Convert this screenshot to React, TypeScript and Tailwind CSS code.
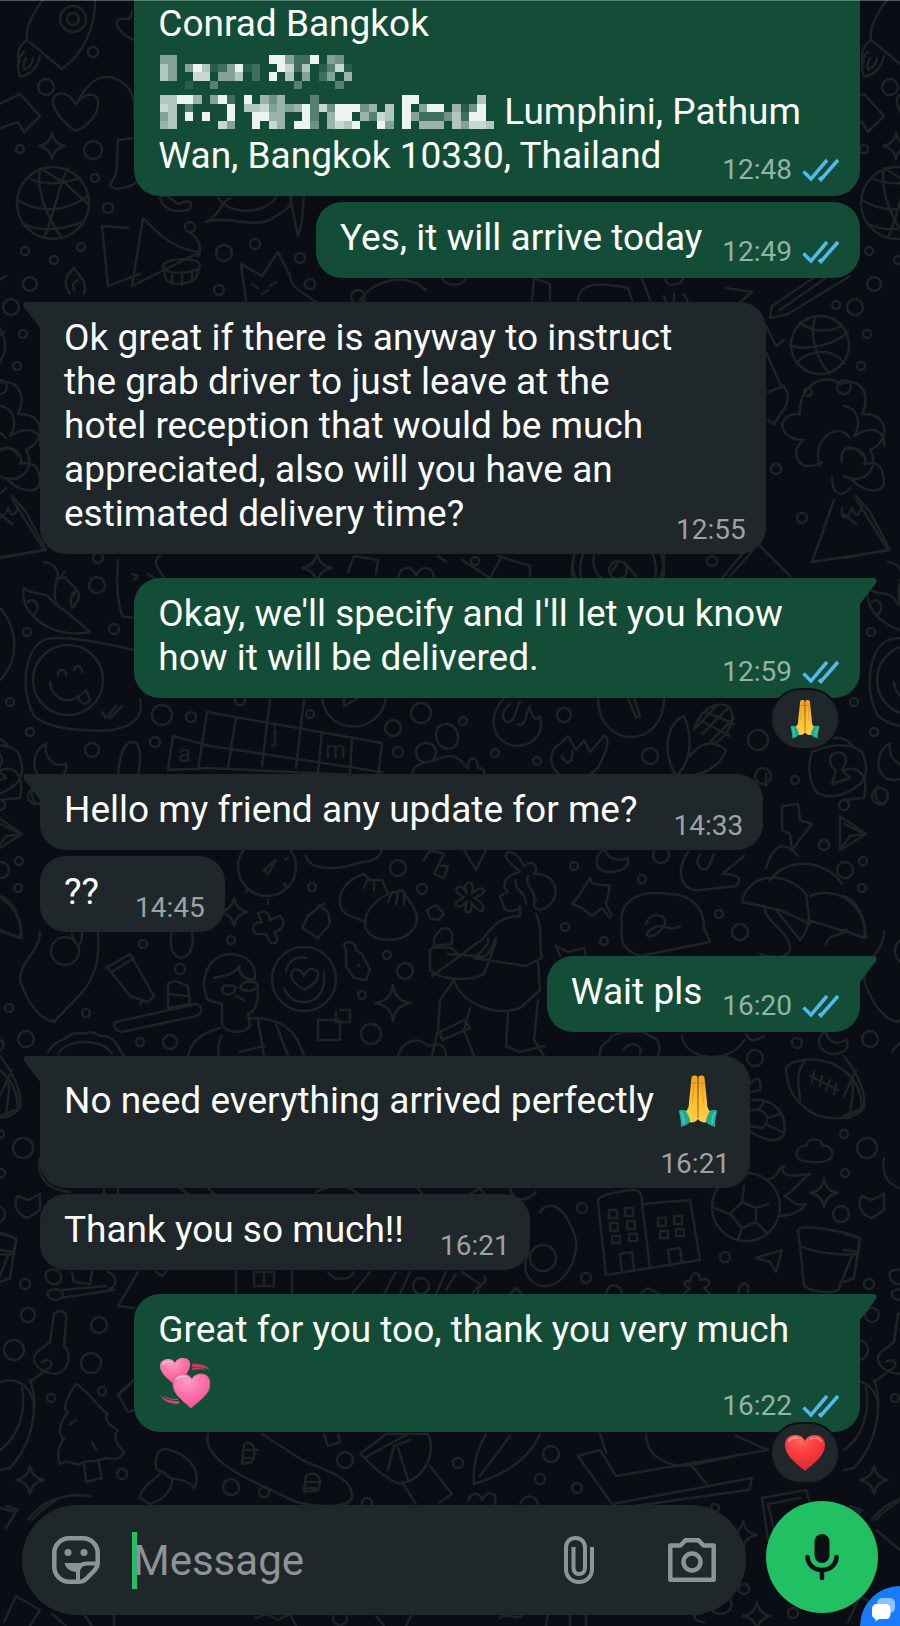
import React from "react";

type EmojiName = "hands" | "heart" | "hearts";

interface Message {
  id: number;
  from: "me" | "them";
  lines: React.ReactNode[];
  time: string;
  first?: boolean; // first of a group, gets the tail
  wide?: boolean; // wrapped text, fills the whole bubble width
  metaBelow?: boolean;
  cutOff?: boolean;
  reaction?: EmojiName;
}

/* ---------- wallpaper ---------- */

// x, y, radius
const BUBBLES = [
  [93, 52, 5], [46, 87, 8], [20, 149, 4], [93, 150, 9], [95, 178, 4], [108, 208, 5], [190, 227, 5], [25, 251, 4],
  [54, 260, 4], [81, 247, 4], [224, 253, 8], [255, 244, 5], [30, 284, 7], [300, 258, 5], [219, 290, 5], [310, 284, 5],
  [358, 297, 7], [11, 307, 8], [23, 334, 4], [17, 366, 4], [0, 387, 7], [836, 305, 4], [808, 392, 4], [776, 469, 5],
  [802, 518, 5], [712, 561, 5], [475, 561, 4], [98, 558, 5], [97, 585, 8], [27, 632, 4], [114, 629, 5], [10, 702, 4],
  [162, 715, 10], [191, 717, 5], [30, 732, 4], [240, 700, 5], [155, 742, 5], [92, 750, 7], [310, 714, 4], [393, 728, 8],
  [421, 713, 10], [463, 721, 4], [398, 752, 5], [495, 753, 4], [564, 715, 7], [650, 756, 8], [537, 761, 4], [758, 740, 10],
  [795, 780, 4], [763, 776, 8], [36, 796, 8], [0, 805, 5], [824, 845, 5], [19, 861, 4], [18, 888, 4], [65, 951, 14],
  [143, 944, 4], [180, 969, 5], [231, 940, 4], [312, 887, 4], [398, 868, 8], [422, 889, 5], [387, 955, 4], [405, 971, 8],
  [362, 995, 4], [9, 1008, 4], [86, 1013, 4], [26, 1039, 8], [140, 1042, 4], [170, 1042, 7], [371, 1034, 10], [574, 866, 4],
  [661, 855, 8], [642, 879, 4], [565, 927, 4], [604, 941, 4], [719, 914, 4], [740, 932, 8], [797, 1043, 5], [1, 870, 8],
  [755, 1058, 8], [582, 1208, 5], [725, 1257, 5], [586, 1278, 5], [841, 1214, 8], [25, 1284, 5], [1, 1173, 4], [0, 1134, 4],
  [23, 1148, 10], [421, 1286, 8], [28, 1315, 7], [99, 1325, 8], [91, 1363, 10], [14, 1350, 10], [51, 1398, 4], [102, 1391, 4],
  [122, 1474, 5], [231, 1487, 8], [264, 1492, 5], [345, 1460, 8], [458, 1463, 5], [551, 1454, 8], [540, 1479, 5],
  [577, 1488, 5], [367, 1503, 5], [715, 1508, 4], [744, 1589, 5], [793, 1613, 5], [340, 1618, 7],
];

const SPARKLES = [
  [52, 146, 13], [317, 568, 15], [234, 912, 14], [393, 1003, 18], [824, 1193, 14], [30, 1480, 14], [743, 1535, 14], [757, 1616, 14],
];

const STROKES = [
  // rocket with flame
  "M95 -6C97 28 82 55 62 69L27 40C24 26 38 4 50 -8M27 40C18 46 16 56 20 62M24 52C16 58 18 70 20 77C32 74 38 66 40 56M26 58C22 64 24 66 24 70C32 66 32 62 33 58",
  // broken arrow, heart and waving person
  "M0 104L20 94L40 116L24 132L18 122L0 128M76 131C56 118 46 98 58 94C66 91 72 98 76 104C84 92 98 92 98 102C99 114 88 126 76 131M76 104C88 80 104 70 122 82C134 90 136 106 134 120M134 40C120 34 114 24 118 20C126 16 130 24 132 12M134 138L118 140C116 160 120 172 110 184C112 194 134 186 138 180",
  // lattice ball
  "M28 178C44 186 62 184 80 178M18 200C40 214 66 212 88 196M24 224C40 232 62 230 82 222M40 168C36 190 46 216 62 238M68 168C58 186 56 210 44 238M40 168L66 184L88 204",
  // paper sails and drum
  "M102 226L108 286L140 274M102 226L128 228M143 218L132 286L200 252C176 250 160 236 143 218ZM190 232C200 240 202 250 198 256M163 266C163 258 200 256 200 266C200 274 163 276 163 266ZM163 266L166 280C174 286 192 284 196 278L200 266M172 274V284M182 275V285M192 273V281",
  // campfire and fox
  "M70 294C62 282 66 276 74 268C78 276 88 280 84 294M74 290C72 284 74 282 78 280M246 300L241 264L262 276L278 252L290 276C292 290 304 292 316 302M252 284L258 288M270 286L276 282M262 294L268 290",
  // leaves and whale between the bubbles
  "M160 198C166 192 172 200 178 204C192 198 194 204 188 210C176 212 164 212 160 198M206 222C220 216 222 200 230 198M206 222C232 214 256 232 276 216C296 206 290 198 292 196M290 196L298 236C304 222 302 206 304 198M218 198C230 214 260 216 276 198",
  // sun, gift and pencils under the second bubble
  "M360 300C372 282 404 270 426 290M532 300L534 278L550 284V300M578 300C580 282 600 282 628 288L632 300M642 278L650 300M666 276C662 288 682 288 684 276M664 296L666 302M674 294V302M684 294L688 302M726 288L752 292L738 304M772 306L822 272M780 310L834 272M788 314L850 276M772 306L770 318L788 314M442 278C446 288 464 286 466 278",
  // basketball
  "M790 345C806 352 836 344 848 332M800 322C812 334 838 332 842 324M816 316C808 332 816 360 830 374M796 364C808 348 836 348 844 364",
  // blossom tree, volcano
  "M822 462C798 476 788 450 804 440C776 440 776 412 800 414C798 384 826 372 840 384C860 376 872 394 862 414C888 412 892 440 870 450C882 470 860 486 844 476M820 466C810 440 838 420 850 438M842 462C838 446 856 442 862 456M832 478C832 492 840 500 850 488M834 500L812 562L890 550L870 512L858 498M842 508C840 524 850 516 852 508C856 520 860 514 862 506",
  "M766 326L776 346L784 340M766 352L780 384C790 390 790 402 782 412L774 424L768 420M768 392L784 386",
  // left edge tree
  "M0 406C14 408 18 424 10 436C30 424 42 432 40 446M0 450C18 444 24 458 20 464C36 460 40 470 40 484C36 494 20 492 8 480M12 496L14 502L44 550L0 558M0 514L12 524",
  // strip under the long message
  "M44 562C58 564 60 576 56 580M160 556C150 562 160 570 164 578M118 560C116 590 118 600 122 616L134 618M132 574L138 576L134 580M148 574L154 578M348 572L354 556L378 560L376 574M438 556L446 562M462 560L490 578L502 556M498 556L530 566V576M398 578C400 564 414 566 416 576C420 564 434 566 434 578M574 556C572 566 572 572 576 578M594 556C592 568 596 574 602 578M664 556C664 568 662 574 660 578M612 572L618 562M624 562L636 576M722 578L754 540L770 556L790 576M730 576L752 552",
  // chilli peppers
  "M24 588C18 612 50 640 90 632C70 616 64 608 54 604C46 588 36 598 24 588ZM56 604C52 582 58 576 66 578C72 588 88 592 72 608M72 608C66 592 84 584 70 600M60 578L64 572M28 602C34 596 42 608 34 614",
  // smiley card
  "M44 640C60 634 100 642 134 650M44 640C24 650 20 690 34 716C50 730 90 732 112 730C134 726 144 716 140 700M58 675C58 668 66 668 66 675M74 670C76 664 82 666 82 672M50 682C52 700 70 708 86 690L90 700C86 706 80 704 78 696M102 712L106 718L116 706M110 718L122 706M0 608C18 628 20 660 0 680",
  // crossword tiles
  "M207 712L382 743L378 776L208 768L168 770L173 736L206 745M207 712L198 770M236 717L228 768M270 700L262 766M304 700L296 768M204 745L382 772M322 732L318 772M352 738L350 774",
  // play button, fist, clock, corn
  "M322 698C326 736 380 736 386 698M344 698V706L358 698M504 698C488 716 490 740 514 746C536 746 544 732 540 716C536 722 532 718 530 708M510 704C500 712 502 722 508 722C516 722 516 706 520 702M518 724C526 728 526 712 530 706M598 698C598 750 664 750 664 698M628 698L636 718L640 716L634 698M676 776C662 752 666 724 684 716C694 740 690 764 676 776ZM676 776C690 780 720 770 726 750C714 740 700 742 690 756M694 730C698 714 712 700 728 706C740 720 724 740 712 744M700 720L730 736M706 712L734 724M702 734L728 708M710 742L734 718M696 728L716 706",
  // moon, friends and hand
  "M46 744C30 750 30 780 50 780C62 780 68 770 66 764C54 768 44 758 46 744ZM118 776C120 752 124 742 134 742C140 744 142 756 138 776M416 752C416 740 436 740 436 752C436 766 416 766 416 752ZM436 734C436 720 458 720 458 738C458 754 436 752 436 734ZM412 776C412 760 430 764 440 758C460 752 462 764 468 768C468 754 478 756 478 768C486 768 486 776 480 776M562 776C548 768 548 750 560 744L568 736L576 750L584 740L590 752L604 736C612 738 606 752 598 768L588 776M562 756C566 766 574 764 572 750",
  // padlock
  "M812 752C830 744 850 742 862 752C868 766 868 776 860 784C846 796 828 800 816 792C808 778 808 764 812 752ZM830 760C830 750 846 750 846 760C846 766 842 768 842 770L850 778L832 784L836 770C832 768 830 764 830 760M816 750C822 736 846 734 852 746",
  // bolt, play cursor
  "M782 806L798 804L800 820L812 824L792 850L790 834L782 830ZM840 816L866 834L850 836L840 850Z",
  "M0 770C18 764 24 780 20 798L0 800M0 824L22 834L0 848M34 786C28 794 34 804 40 804M766 774V786M766 868C776 836 790 846 798 856",
  // stopwatch, tongue, ladder
  "M276 860L264 870L268 874ZM240 856V858M246 892L248 889M288 858L285 860M286 886L284 884M254 846L246 842M268 900V904M306 856C310 872 340 870 362 862C376 862 382 854 382 848M424 860L430 850L444 854L438 866M438 866L448 866L444 878L434 874L438 866M464 850L476 870L486 850",
  // dumplings
  "M364 874C338 882 332 908 350 916L366 922M364 874L370 880L382 880L388 894M368 878L364 888M374 880L374 890M388 894C362 908 358 930 376 938C406 946 424 926 414 908L402 890ZM392 892L388 902M398 892L396 904M404 894L404 904",
  // star flower, cube, cross, bottle
  "M466 884C471 880 474 884 472 894C478 886 486 888 484 892C482 896 476 896 474 898C482 902 486 908 482 911C478 912 474 906 471 902C473 910 470 914 466 912C464 908 467 904 467 901C461 908 456 908 456 904C456 900 462 899 464 897C456 894 455 889 458 887C462 886 465 890 467 893C465 890 464 887 466 884ZM427 910L436 905L444 914L438 920L430 918ZM258 914C264 908 270 914 270 920L280 916C286 922 284 930 274 932C280 940 276 946 270 942L266 934L256 934C250 928 254 922 262 922ZM308 916L320 906L328 912L330 924L318 938L302 928ZM318 906L324 904",
  // lotion bottle, tube, shapes
  "M344 944C348 940 356 942 356 950L362 954L370 970L366 980L354 978L346 966L346 952ZM358 965L359 966M106 968L130 954L154 996L148 1002L130 996L108 968ZM112 972L134 958M142 1000L140 1004M318 1020H340V1040H318ZM340 1010H350V1022H336V1012",
  // heart coin
  "M304 990C292 982 288 974 294 970C300 968 304 974 304 976C306 970 312 966 318 972C320 980 312 986 304 990M286 972C288 958 300 956 306 958M324 972C326 990 318 1002 304 1002M284 988C290 1000 296 1002 304 1002",
  // cake slice on a plate
  "M168 984C174 978 182 984 188 986L190 1004L168 1008ZM168 994L188 996M116 1022L196 1004C204 1006 202 1014 196 1016L122 1032C114 1030 112 1024 116 1022Z",
  // man with glasses
  "M208 1000C198 980 208 954 232 954C250 956 258 968 254 980C240 980 238 968 240 966C232 976 222 976 214 978M222 990C222 984 234 984 236 988C234 996 224 996 222 990ZM240 988C242 980 256 980 258 986C254 992 244 992 240 988M236 996L244 1000M258 990C258 1004 254 1012 248 1014L250 1026C244 1034 226 1034 222 1024V1004L208 1000M220 1028C196 1034 190 1046 188 1056M222 1036C216 1044 220 1050 218 1056M250 1018C280 1018 296 1028 304 1056M258 1020L264 1056M276 1024L288 1056M240 1052L264 1046",
  // guitar and flower at the left
  "M40 932C40 952 20 960 20 980C28 1006 42 1020 54 1022C64 1010 88 990 92 976C100 962 98 944 98 932M0 896C12 900 24 920 20 938L0 930M82 932C82 948 76 950 72 934M172 932C164 966 198 966 192 932M48 1052C56 1038 64 1042 68 1036C76 1030 82 1036 90 1032C98 1032 98 1038 104 1036C118 1038 118 1050 124 1056M58 1054C66 1038 104 1038 112 1054",
  // woman with coffee
  "M520 872C510 862 502 858 508 852C518 852 520 860 524 866C532 858 540 868 534 874C556 872 562 896 548 906C538 914 530 906 536 900M520 872C502 876 502 888 508 892L500 896C500 900 504 902 504 908C510 914 518 910 520 906V916M516 880C514 892 526 890 526 904M528 876C524 888 536 888 534 900M520 916C498 916 490 930 480 942M536 914C544 930 538 948 542 958L526 966L474 958C484 950 490 942 488 938M496 938C490 950 488 960 478 956L448 954M478 942L460 956M440 930C446 926 454 930 452 938V944L434 946V938ZM430 950C432 946 440 948 452 948L460 956L432 976M430 950L430 970C440 980 470 982 484 974L496 942M454 980L440 1000L438 1030L432 1056M454 980C460 1000 490 1018 520 1008L540 990L538 962M470 1008L464 1030L474 1056M440 1032L464 1020L470 1028L442 1040ZM508 1012L506 1046M538 1000L534 1040L544 1056M506 1046L520 1052L544 1046",
  // push pin, signed hat, umbrella
  "M590 878C590 886 602 884 610 886L606 904L612 916M590 878C582 890 580 896 572 904L582 908L592 916L602 908M602 908L610 918M622 924C618 900 640 890 668 894C692 894 704 908 704 928L710 942L640 956C622 950 620 940 622 924ZM646 924C650 910 670 914 664 926C658 938 640 940 650 930C664 920 668 934 680 926M742 902C748 872 786 870 806 894L810 924L780 910ZM770 880C790 854 828 862 842 884M810 896C834 886 864 900 866 938L808 920M764 906C766 924 786 928 790 946C792 960 770 958 760 954M776 910L800 940C808 932 806 926 810 922M846 930C838 938 830 932 826 944",
  // moon, hand, bow
  "M606 848C592 856 594 872 610 872C622 872 630 866 628 858C618 862 604 858 606 848ZM688 852C674 872 682 892 700 890L736 886C744 878 736 874 722 874L744 856M700 854C694 864 700 872 708 868L714 854M560 956L556 946L568 952L584 948L586 956",
  // blobs under Wait pls
  "M398 1056C402 1040 420 1036 428 1046C440 1042 446 1046 446 1056M600 1056C598 1044 610 1042 612 1036C624 1030 644 1030 650 1036C662 1040 660 1050 658 1056M624 1050C628 1040 644 1044 640 1054M682 1036C684 1060 730 1066 744 1040M746 1034C752 1044 756 1040 764 1036M826 1032C814 1036 818 1052 832 1054C846 1054 850 1046 846 1040C836 1046 828 1042 826 1032Z",
  // american football
  "M786 1070C784 1064 800 1058 820 1060C848 1066 862 1084 862 1110C850 1122 820 1120 808 1110C794 1100 788 1090 786 1070ZM810 1076L838 1090M814 1072L812 1082M822 1076L820 1086M830 1080L826 1090M836 1084L834 1094M804 1062C794 1076 800 1090 800 1100M848 1074C858 1086 850 1100 850 1118",
  // wreath
  "M750 1084C758 1074 762 1080 760 1090L752 1092M752 1100C772 1098 788 1112 784 1134C776 1146 762 1138 750 1132M752 1110C766 1108 772 1120 762 1128L750 1126M764 1102L758 1110M780 1114L768 1118M782 1132L766 1124",
  "M0 1056C14 1074 22 1092 20 1108L0 1116M0 1096L12 1070",
  // cloud
  "M800 1160C792 1154 800 1144 806 1146C808 1136 824 1138 822 1146C832 1144 836 1156 828 1160C820 1164 806 1162 800 1160Z",
  // building
  "M598 1202C596 1196 612 1192 632 1190C642 1190 642 1196 642 1204L690 1200L700 1260L606 1275ZM642 1204L650 1268M609 1210H617V1218H609ZM625 1208H633V1216H625ZM610 1223H618V1231H610ZM627 1221H635V1229H627ZM612 1236H620V1243H612ZM629 1234H637V1241H629ZM658 1218H666V1226H658ZM674 1216H682V1224H674ZM660 1231H668V1238H660ZM676 1229H684V1236H676ZM622 1272L620 1254L632 1252L634 1270M670 1265L668 1250L680 1248L682 1263",
  // flaming football
  "M730 1214L742 1202L756 1208V1222L742 1228ZM730 1214L714 1208M742 1202L744 1186M756 1208L768 1204M756 1222L766 1232M742 1228L738 1240M766 1180C782 1176 776 1168 784 1166C778 1178 796 1176 810 1174C798 1182 796 1190 784 1196C796 1202 792 1206 806 1204C800 1212 790 1216 778 1216",
  // fried egg, plane, flower pot
  "M540 1212C548 1200 562 1206 570 1224C580 1244 576 1252 572 1264C562 1284 548 1290 536 1284C524 1278 522 1262 530 1252M756 1258L782 1250L776 1272L770 1262ZM798 1230C800 1222 860 1234 860 1240L858 1254C840 1256 812 1252 800 1246ZM800 1246L804 1286C812 1292 832 1294 838 1290L852 1256",
  "M690 1282C690 1272 700 1270 700 1280C708 1276 714 1284 704 1288L710 1294M690 1282C684 1278 682 1286 690 1288L684 1294M738 1294C740 1280 750 1280 748 1292M640 1294L648 1288L660 1294M606 1294C608 1282 620 1282 622 1294M510 1294L516 1288L522 1294",
  // train, tent, house and people below Thank you
  "M46 1272C56 1266 64 1272 60 1282C52 1288 44 1280 46 1272ZM48 1292C56 1286 66 1292 62 1298C54 1302 46 1298 48 1292ZM62 1290L106 1286M60 1298L114 1290M72 1272L74 1282L90 1284L92 1272M108 1272C118 1276 118 1286 108 1290M138 1272L118 1306L134 1308M156 1272L162 1276L166 1272M236 1272V1294M292 1272V1294M254 1272H274V1286H254ZM264 1272V1286M328 1272C334 1282 350 1280 354 1272M370 1272L352 1294M396 1272L384 1294M410 1272L400 1294M446 1272L436 1294M456 1274L446 1290M462 1272L480 1284L472 1294M484 1276C490 1284 476 1284 478 1294",
  // strip above Thank you
  "M104 1188V1194M118 1188V1194M180 1188L188 1194M208 1188L214 1194M316 1192C330 1184 348 1184 358 1194M418 1188L422 1194M470 1194L480 1188L484 1194M510 1188C512 1200 524 1204 536 1192",
  // plants at the left edge
  "M18 1196C12 1204 18 1216 28 1218L40 1210V1194L28 1200ZM0 1234L16 1238L10 1278L0 1282M0 1250L14 1252M40 1158C36 1180 50 1190 70 1192",
  // keys
  "M54 1314C62 1308 68 1312 66 1322L64 1346C72 1354 70 1370 56 1374C34 1372 28 1356 40 1350L50 1342ZM42 1362C50 1356 56 1366 46 1370L30 1382M0 1382C20 1376 34 1390 34 1408",
  // pine tree, mushroom
  "M76 1384C66 1398 62 1410 68 1412C58 1424 58 1436 64 1438C56 1450 58 1460 60 1464C70 1458 72 1466 80 1464C90 1458 96 1464 104 1458C116 1460 120 1460 124 1452C116 1444 112 1436 118 1430C106 1424 104 1416 108 1414C96 1406 94 1396 76 1384ZM84 1464L86 1482L102 1478L98 1460M70 1424L76 1420M92 1442L96 1450M156 1468C154 1454 160 1446 170 1450C192 1456 202 1474 194 1488C186 1478 176 1480 170 1478C164 1470 162 1474 156 1468ZM160 1474C148 1484 140 1490 140 1498L150 1504C164 1500 172 1490 172 1480",
  // orange slices beside the last bubble
  "M30 1380C38 1400 36 1440 10 1468L0 1470M22 1388C26 1410 20 1436 0 1450M134 1380L118 1394L128 1412L134 1410M120 1394L134 1380",
  // skateboard
  "M208 1434C204 1450 222 1466 250 1480L296 1502C322 1508 352 1508 352 1496C352 1478 330 1472 302 1460L262 1434M244 1444C252 1440 258 1448 252 1462L242 1464ZM246 1450H258M244 1458H254M306 1476C314 1470 324 1476 318 1490L304 1492ZM306 1482H320M304 1488H316M324 1434L328 1446L340 1442L338 1434",
  // popsicle, leaf, laptop
  "M360 1454L386 1434H428C436 1450 428 1478 400 1484C382 1478 372 1464 360 1454ZM364 1458L408 1434M388 1470L394 1446L410 1440M402 1482L416 1504M430 1466L452 1494L440 1502M398 1448L408 1480M474 1484C472 1462 480 1444 486 1434M474 1484C500 1476 528 1462 540 1434M480 1476L510 1436M578 1456L600 1450L616 1476L768 1450M578 1456L612 1504L752 1478C750 1482 752 1488 748 1490L620 1508M600 1434L606 1452M692 1466L708 1486M646 1434C646 1460 676 1470 696 1464L736 1456M736 1436L768 1450M468 1500C474 1488 482 1496 482 1500C488 1488 500 1494 494 1504M520 1504C526 1492 536 1496 538 1504",
  // photo frame, rope
  "M762 1498L806 1490L812 1510M762 1498L768 1540M768 1504L800 1498M768 1504L774 1530M0 1508L16 1512L6 1528M28 1520C40 1504 60 1492 90 1496M850 1506L862 1510",
  // bottom strip
  "M4 1622L16 1596L40 1610L30 1626M52 1614L66 1626M84 1614L92 1626M114 1614V1626M256 1618L266 1614L278 1620L290 1614L296 1626M376 1616L384 1626M412 1614L406 1626M500 1618C506 1612 516 1620 522 1616M548 1614L546 1626M570 1614V1626M586 1614V1626M712 1604C722 1590 736 1598 730 1610C720 1618 708 1612 712 1604M700 1614C690 1612 694 1622 704 1622M876 1520C884 1510 892 1506 900 1500M876 1530L900 1550",
];

function Doodles() {
  return (
    <svg
      aria-hidden="true"
      viewBox="0 0 900 1626"
      preserveAspectRatio="xMidYMin slice"
      className="pointer-events-none absolute inset-0 h-full w-full"
      fill="none"
      stroke="#1e2326"
      strokeWidth="2.5"
      strokeLinecap="round"
      strokeLinejoin="round"
    >
      <defs>
        <g id="doodle-tile">
          {BUBBLES.map(([x, y, r]) => (
            <circle key={`${x}-${y}`} cx={x} cy={y} r={r} />
          ))}
          {SPARKLES.map(([x, y, r]) => (
            <path
              key={`${x}-${y}`}
              d={`M${x} ${y - r}Q${x + 2} ${y - 2} ${x + r} ${y}Q${x + 2} ${y + 2} ${x} ${y + r}Q${x - 2} ${y + 2} ${x - r} ${y}Q${x - 2} ${y - 2} ${x} ${y - r}Z`}
            />
          ))}
          {STROKES.map((d) => (
            <path key={d} d={d} />
          ))}
          <circle cx="73" cy="19" r="13" />
          <circle cx="73" cy="19" r="6" />
          <circle cx="53" cy="203" r="36" />
          <circle cx="820" cy="345" r="29" />
          <circle cx="618" cy="570" r="46" />
          <circle cx="618" cy="570" r="38" />
          <circle cx="618" cy="570" r="9" />
          <circle cx="68" cy="680" r="35" />
          <circle cx="267" cy="867" r="29" />
          <circle cx="304" cy="979" r="32" />
          <circle cx="746" cy="1207" r="34" />
          <circle cx="543" cy="1258" r="13" />
        </g>
      </defs>
      <use href="#doodle-tile" />
      <use href="#doodle-tile" x="844" />
      <use href="#doodle-tile" x="-844" />
      <g className="font-[Roboto,sans-serif] text-[24px]" fill="#1e2326" stroke="none">
        <text x="178" y="762">a</text>
        <text x="272" y="742">j</text>
        <text x="325" y="758">m</text>
      </g>
    </svg>
  );
}

/* ---------- icons ---------- */

function Ticks() {
  return (
    <svg viewBox="0 0 38 24" className="h-6 w-[38px] shrink-0" fill="none" stroke="#53b9e9" strokeWidth="3.5" role="img" aria-label="Read">
      <path d="M1.5 13.5L9 21L25 2" />
      <path d="M17 19.5L19 21.5L36 2" />
    </svg>
  );
}

function HandsEmoji({ className }: { className: string }) {
  return (
    <svg viewBox="0 0 40 52" className={className} role="img" aria-label="Folded hands">
      <defs>
        <linearGradient id="skin" x1="0" y1="0" x2="0" y2="1">
          <stop offset="0" stopColor="#f2a324" />
          <stop offset=".55" stopColor="#fdc130" />
          <stop offset="1" stopColor="#ffd04a" />
        </linearGradient>
      </defs>
      <path d="M13.5 3C13.5 0 18.5 0 19.5 2L20 44C18 47 14 48 11 47L6 38C10 35 11 32 11 27Z" fill="url(#skin)" />
      <path d="M26.5 3C26.5 0 21.5 0 20.5 2L20 44C22 47 26 48 29 47L34 38C30 35 29 32 29 27Z" fill="url(#skin)" />
      <path d="M20 3V43M14 8H18.5M21.5 8H26" stroke="#c97a14" strokeWidth="1.2" fill="none" />
      <path d="M16 8L14.5 28M24 8L25.5 28" stroke="#e69a1d" strokeWidth="1" fill="none" />
      <path d="M1 37C0 36 1 35 3 35L7 35C10 39 12 43 12 47C9 50 6 51 3 52C3 46 2 41 1 37Z" fill="#1fa993" />
      <path d="M39 37C40 36 39 35 37 35L33 35C30 39 28 43 28 47C31 50 34 51 37 52C37 46 38 41 39 37Z" fill="#1fa993" />
      <path d="M3 37C5 41 6 45 6 49M37 37C35 41 34 45 34 49" stroke="#3fc7b0" strokeWidth="2" fill="none" />
    </svg>
  );
}

function HeartEmoji({ className }: { className: string }) {
  return (
    <svg viewBox="0 0 40 36" className={className} role="img" aria-label="Red heart">
      <defs>
        <radialGradient id="red-heart" cx=".4" cy=".1" r=".95">
          <stop offset="0" stopColor="#ff6a62" />
          <stop offset=".4" stopColor="#fb3f40" />
          <stop offset="1" stopColor="#dc2430" />
        </radialGradient>
      </defs>
      <path d="M20 36C12 29 0 21 0 10C0 4 4 0 10 0C15 0 18 2 20 6C22 2 25 0 30 0C36 0 40 4 40 10C40 21 28 29 20 36Z" fill="url(#red-heart)" />
      <path d="M4 6C6 3 9 2 13 3M26 4C29 2 33 2 36 6" stroke="#ffa49b" strokeWidth="2" strokeLinecap="round" fill="none" opacity=".7" />
    </svg>
  );
}

function HeartsEmoji({ className }: { className: string }) {
  return (
    <svg viewBox="0 0 50 50" className={className} role="img" aria-label="Revolving hearts">
      <defs>
        <radialGradient id="pink-heart" cx=".4" cy=".2" r=".9">
          <stop offset="0" stopColor="#ff9dc6" />
          <stop offset=".5" stopColor="#fd6fa8" />
          <stop offset="1" stopColor="#ee4b8b" />
        </radialGradient>
      </defs>
      <path d="M14 26C6 20 0 14 0 8C0 3 4 1 8 1C12 1 14 3 15 5C16 2 19 0 23 0C28 0 31 3 30 8C29 15 21 22 14 26Z" fill="url(#pink-heart)" />
      <path d="M32 6C40 5 46 7 50 12C44 9 38 9 32 9ZM32 10C38 9 44 10 46 12C40 11 36 11 32 12Z" fill="#c83a62" />
      <path d="M0 37C5 42 12 43 19 43V46C11 46 4 44 0 37ZM3 37C8 41 14 41 18 41V42C11 42 6 41 3 37Z" fill="#d8436c" />
      <path d="M31 50C22 42 13 36 13 26C13 20 17 16 22 16C27 16 30 18 32 21C33 18 37 16 41 16C47 16 50 20 50 26C50 36 40 42 31 50Z" fill="url(#pink-heart)" stroke="#e8548c" strokeWidth=".8" />
      <path d="M3 6C5 3 8 3 11 4M17 21C19 18 23 18 26 19" stroke="#ffc4dc" strokeWidth="1.5" strokeLinecap="round" fill="none" />
    </svg>
  );
}

/* ---------- hidden address lines ---------- */

// one digit per cell, 0 (clear) to 9 (white)
const ROOM_MASK = [
  "55000000000009952290540",
  "75059712591200982701381",
  "75008805570209070502506",
  "00010030000000003000030",
];

const STREET_MASK = [
  "7799605920906460003000000000099000000070",
  "8703000090778565693849994607090599061490",
  "5709090090099660093069906387095222472990",
  "6700000850090860994068790095090666075887",
];

function Redacted({ rows, className }: { rows: string[]; className: string }) {
  return (
    <svg viewBox={`0 0 ${rows[0].length} 4`} preserveAspectRatio="none" shapeRendering="crispEdges" className={className} aria-hidden="true">
      {rows.map((row, y) =>
        row.split("").map((cell, x) =>
          cell === "0" ? null : (
            <rect key={`${x}-${y}`} x={x} y={y} width="1" height="1" fill="#f4faf8" opacity={cell === "9" ? 0.97 : Number(cell) / 10} />
          )
        )
      )}
    </svg>
  );
}

/* ---------- messages ---------- */

const messages: Message[] = [
  {
    id: 1,
    from: "me",
    wide: true,
    cutOff: true,
    time: "12:48",
    lines: [
      "Conrad Bangkok",
      <Redacted rows={ROOM_MASK} className="ml-0.5 mt-2 h-[34px] w-[192px]" />,
      <>
        <Redacted rows={STREET_MASK} className="ml-0.5 h-[34px] w-[334px]" />
        <span className="ml-2.5">Lumphini, Pathum</span>
      </>,
      "Wan, Bangkok 10330, Thailand",
    ],
  },
  { id: 2, from: "me", time: "12:49", lines: ["Yes, it will arrive today"] },
  {
    id: 3,
    from: "them",
    first: true,
    wide: true,
    time: "12:55",
    lines: [
      "Ok great if there is anyway to instruct",
      "the grab driver to just leave at the",
      "hotel reception that would be much",
      "appreciated, also will you have an",
      "estimated delivery time?",
    ],
  },
  {
    id: 4,
    from: "me",
    first: true,
    wide: true,
    time: "12:59",
    reaction: "hands",
    lines: ["Okay, we'll specify and I'll let you know", "how it will be delivered."],
  },
  { id: 5, from: "them", first: true, time: "14:33", lines: ["Hello my friend any update for me?"] },
  { id: 6, from: "them", time: "14:45", lines: ["??"] },
  { id: 7, from: "me", first: true, time: "16:20", lines: ["Wait pls"] },
  {
    id: 8,
    from: "them",
    first: true,
    metaBelow: true,
    time: "16:21",
    lines: [
      <span className="flex h-[62px] items-center gap-6">
        No need everything arrived perfectly
        <HandsEmoji className="mr-3 h-[52px] w-10" />
      </span>,
    ],
  },
  { id: 9, from: "them", time: "16:21", lines: ["Thank you so much!!"] },
  {
    id: 10,
    from: "me",
    first: true,
    wide: true,
    time: "16:22",
    reaction: "heart",
    lines: [
      "Great for you too, thank you very much",
      <span className="flex h-[62px] items-center">
        <HeartsEmoji className="ml-0.5 h-[50px] w-[50px]" />
      </span>,
    ],
  },
];

function Tail({ mine }: { mine: boolean }) {
  return (
    <svg
      viewBox="0 0 17 26"
      aria-hidden="true"
      className={mine ? "absolute left-full top-0 h-[26px] w-[17px] text-[#144d37]" : "absolute right-full top-0 h-[26px] w-[17px] -scale-x-100 text-[#20272a]"}
    >
      <path d="M0 0H14Q18 1 16 5L0 26Z" fill="currentColor" />
    </svg>
  );
}

function Bubble({ message }: { message: Message }) {
  const { from, lines, time, first, wide, metaBelow, cutOff, reaction } = message;
  const mine = from === "me";

  let shape = "rounded-[26px]";
  if (cutOff) shape = "rounded-b-[26px]";
  else if (first) shape = mine ? "rounded-[26px] rounded-tr-none" : "rounded-[26px] rounded-tl-none";

  let layout = mine ? "flex items-end gap-5" : "flex items-end gap-9";
  if (wide) layout = "grid";
  if (metaBelow) layout = "flex flex-col items-end gap-1.5";

  // wrapped messages let the time share the last line's cell
  const cell = wide ? "[grid-area:1/1]" : "";

  return (
    <li className={`flex flex-col ${mine ? "items-end" : "items-start"} ${cutOff ? "" : first ? "mt-6" : "mt-1.5"}`}>
      <div className={`relative ${wide ? "w-[88.5%]" : ""} ${shape} ${mine ? "bg-[#144d37]" : "bg-[#20272a]"}`}>
        {first && <Tail mine={mine} />}
        <div className={`pb-2 pl-6 pr-5 ${layout}`}>
          <div className={`whitespace-nowrap pb-2.5 ${cutOff ? "pt-0.5" : "pt-3.5"} ${cell}`}>
            {lines.map((line, i) => (
              <div key={i} className="flex min-h-11 items-center">
                {line}
              </div>
            ))}
          </div>
          <div className={`flex items-center gap-2.5 self-end justify-self-end ${mine ? "pb-0.5" : ""} ${cell}`}>
            <time className={`text-[28px] leading-8 ${mine ? "text-[#93b3a7]" : "text-[#9da2a4]"}`}>{time}</time>
            {mine && <Ticks />}
          </div>
        </div>
      </div>
      {reaction && (
        <button
          type="button"
          aria-label="Reaction"
          className="relative -mt-2.5 mr-5 flex h-[62px] w-[70px] items-center justify-center rounded-full border-2 border-[#0b1016] bg-[#20272a]"
        >
          {reaction === "hands" ? <HandsEmoji className="h-10 w-[30px]" /> : <HeartEmoji className="h-9 w-10" />}
        </button>
      )}
    </li>
  );
}

function Composer() {
  return (
    <form className="relative mt-auto flex items-start gap-5 px-[22px] pb-[11px] pt-4" onSubmit={(e) => e.preventDefault()}>
      <div className="mt-1 flex h-[110px] min-w-0 flex-1 items-center rounded-full bg-[#20272a] px-[30px] text-[#8d9396]">
        <button type="button" aria-label="Stickers" className="shrink-0">
          <svg viewBox="0 0 48 48" className="size-12" fill="none" stroke="currentColor" strokeWidth="4.5" strokeLinejoin="round">
            <path d="M17 2.3H31C39 2.3 45.7 9 45.7 17V27C45.7 31 44 33 41 36L34 43C31 45.7 30 45.7 27 45.7H17C9 45.7 2.3 39 2.3 31V17C2.3 9 9 2.3 17 2.3Z" />
            <path d="M26 45V37C26 31 29 27.5 35 27.5H45" strokeWidth="4" />
            <circle cx="16" cy="16.5" r="3.5" fill="currentColor" stroke="none" />
            <circle cx="32" cy="16.5" r="3.5" fill="currentColor" stroke="none" />
            <path d="M12.5 27H36C31 28 27 31 26 36C19 36 14 33 12.5 27Z" fill="currentColor" stroke="none" />
          </svg>
        </button>
        <span aria-hidden="true" className="ml-8 h-[57px] w-[5px] shrink-0 bg-[#21c063]" />
        <input
          type="text"
          aria-label="Message"
          placeholder="Message"
          className="-ml-1 h-14 min-w-0 flex-1 bg-transparent text-[42px] text-white caret-[#21c063] outline-none placeholder:text-[#8d9396]"
        />
        <button type="button" aria-label="Attach" className="mr-[74px] shrink-0">
          <svg viewBox="0 0 30 48" className="h-12 w-[30px]" fill="none" stroke="currentColor" strokeWidth="4">
            <path d="M28 11V33.5C28 40.5 22.5 46 15 46C7.5 46 2 40.5 2 33.5V11.5C2 6 6 2 11.5 2C17 2 21 6 21 11.5V32C21 35.5 18.5 38 15 38C11.5 38 9.5 35.5 9.5 32V11" />
          </svg>
        </button>
        <button type="button" aria-label="Camera" className="shrink-0">
          <svg viewBox="0 0 48 44" className="h-11 w-12" fill="none" stroke="currentColor" strokeWidth="4.5" strokeLinejoin="round">
            <path d="M2.3 7.5H12.5L17.5 2.3H30.5L35.5 7.5H45.7V41.7H2.3Z" />
            <circle cx="24" cy="24" r="8.5" />
          </svg>
        </button>
      </div>
      <button type="button" aria-label="Record voice message" className="flex size-28 shrink-0 items-center justify-center rounded-full bg-[#21c063] text-[#0b1014]">
        <svg viewBox="0 0 34 46" className="h-[46px] w-[34px]">
          <rect x="9.5" y="0" width="15" height="29" rx="7.5" fill="currentColor" />
          <path d="M2.5 23C3 31 9 36 17 36C25 36 31 31 31.5 23M17 36V44" fill="none" stroke="currentColor" strokeWidth="4.5" strokeLinecap="round" />
        </svg>
      </button>
    </form>
  );
}

export default function App() {
  return (
    <div className="relative flex min-h-screen flex-col overflow-hidden bg-[#0a0e14] font-[Roboto,sans-serif] text-[37px] leading-[44px] text-[#fafcfb]">
      <Doodles />

      <main className="relative px-10">
        <ul>
          {messages.map((message) => (
            <Bubble key={message.id} message={message} />
          ))}
        </ul>
      </main>

      <Composer />

      {/* thin edge of the header above the scrolled list */}
      <div className="absolute inset-x-0 top-0 h-px bg-white/30" />

      <button type="button" aria-label="Open chat bubble" className="absolute -bottom-10 -right-10 flex size-20 items-start justify-start rounded-full bg-[#177bfb] pl-3 pt-3">
        <svg viewBox="0 0 24 24" className="size-6">
          <rect x="5" y="0" width="18" height="15" rx="5" fill="#8fc0ff" />
          <path d="M5 6H14C17 6 18.500 8 18.500 11V16C18.500 19 17 21 14 21H7L3.500 23.500V21C1 20 0 18.500 0 16V11C0 8 2 6 5 6Z" fill="#fff" />
        </svg>
      </button>
    </div>
  );
}
